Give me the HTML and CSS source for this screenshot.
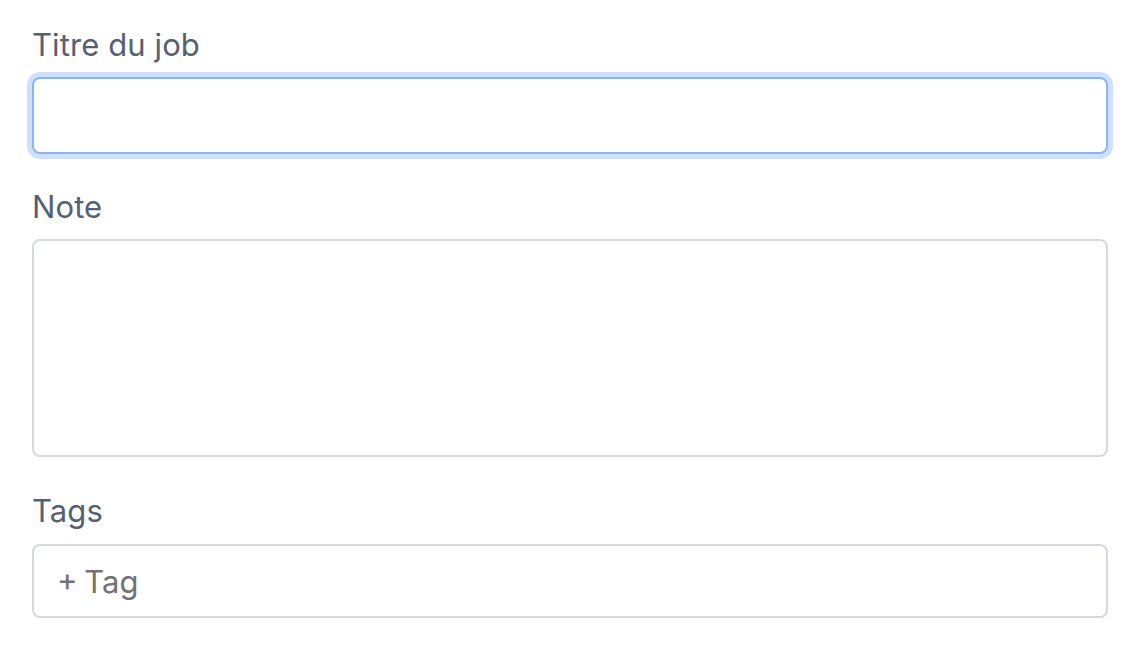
FILE: index.html
```html
<!DOCTYPE html>
<html lang="fr">
<head>
<meta charset="utf-8">
<link rel="stylesheet" href="styles.css">
</head>
<body>
<form class="form">
  <div class="field">
    <label class="label" for="title">Titre du job</label>
    <input class="input input--focus" id="title" type="text">
  </div>
  <div class="field">
    <label class="label" for="note">Note</label>
    <textarea class="input textarea" id="note"></textarea>
  </div>
  <div class="field field--tags">
    <label class="label">Tags</label>
    <div class="input tags"><span class="tag-add">+ Tag</span></div>
  </div>
</form>
</body>
</html>
```
FILE: styles.css
```css
* { box-sizing: border-box; }
html, body { margin: 0; background: #fff; }
body { font-family: Inter, "Noto Sans", sans-serif; }
.form {
  padding: 27px 18px 0 32px;
  display: flex;
  flex-direction: column;
  gap: 35px;
}
.field { display: flex; flex-direction: column; }
.field--tags { margin-top: 1px; }
.label {
  font-size: 31px;
  line-height: 36px;
  color: #566074;
  margin-bottom: 14px;
  letter-spacing: 0.1px;
}
.field--tags .label { margin-bottom: 15px; }
.input {
  display: block;
  width: 100%;
  height: 77px;
  border: 2px solid #d5d8dc;
  border-radius: 8px;
  background: #fff;
  font: inherit;
  outline: none;
  margin: 0;
}
.input--focus {
  border: 2px solid #89b5f7;
  box-shadow: 0 0 0 5px #cfe0fd;
}
.textarea { height: 218px; resize: none; }
.tags {
  height: 74px;
  display: flex;
  align-items: center;
  padding-left: 23px;
}
.tag-add {
  font-size: 31px;
  color: #727272;
  word-spacing: -2px;
}
```
